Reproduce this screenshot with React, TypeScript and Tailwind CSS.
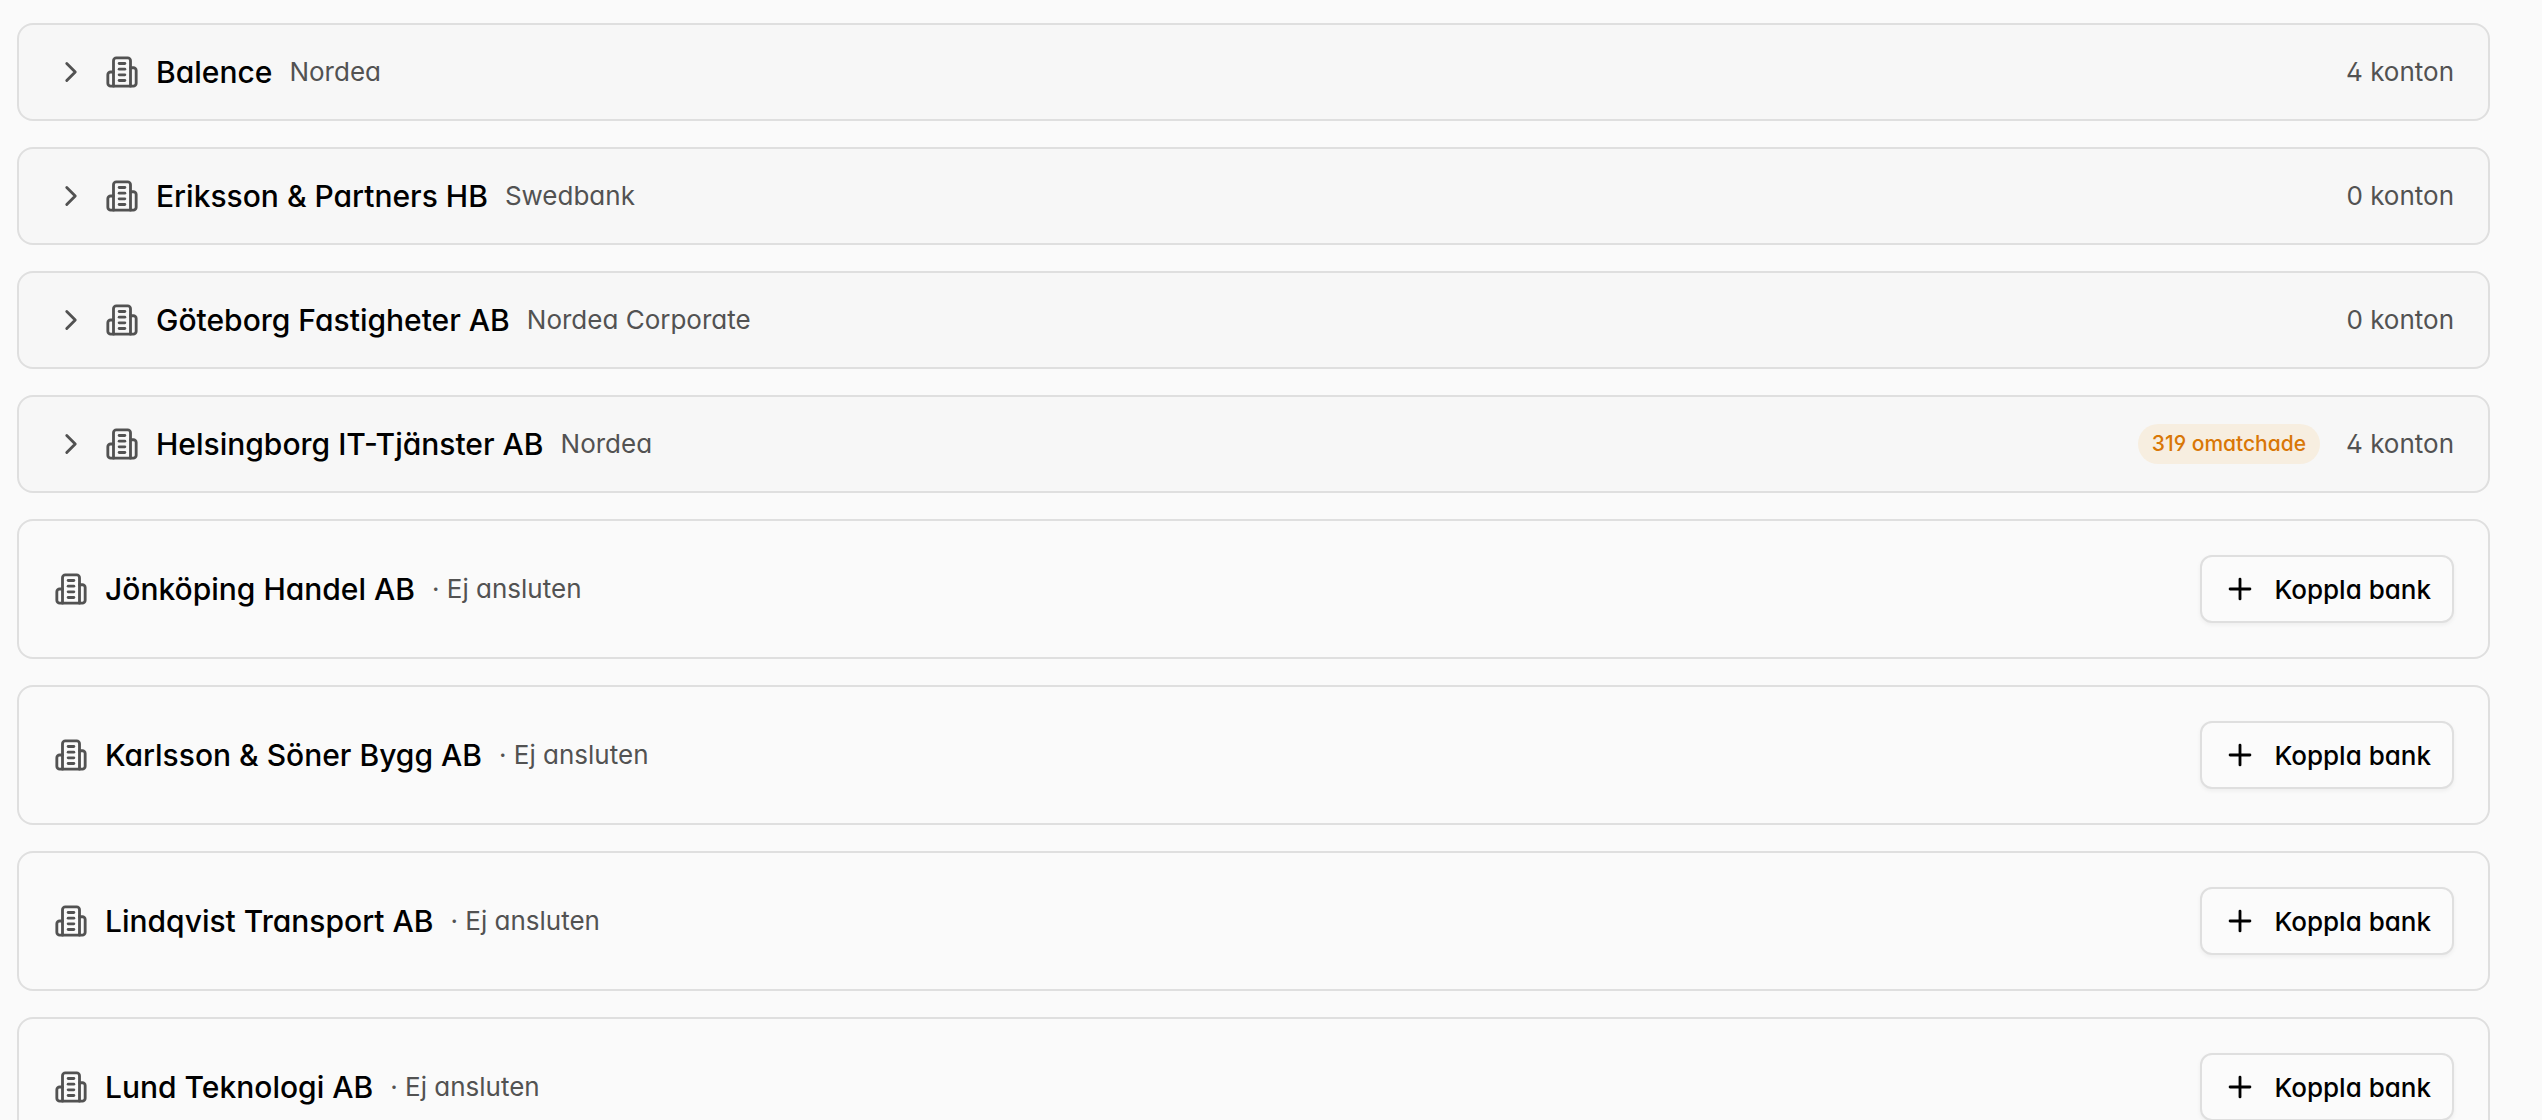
import { ChevronRight, Plus } from 'lucide-react'

type Company = {
  name: string
  bank?: string
  accounts?: number
  unmatched?: number
}

const companies: Company[] = [
  { name: 'Balence', bank: 'Nordea', accounts: 4 },
  { name: 'Eriksson & Partners HB', bank: 'Swedbank', accounts: 0 },
  { name: 'Göteborg Fastigheter AB', bank: 'Nordea Corporate', accounts: 0 },
  { name: 'Helsingborg IT-Tjänster AB', bank: 'Nordea', accounts: 4, unmatched: 319 },
  { name: 'Jönköping Handel AB' },
  { name: 'Karlsson & Söner Bygg AB' },
  { name: 'Lindqvist Transport AB' },
  { name: 'Lund Teknologi AB' },
]

function BuildingIcon() {
  return (
    <svg
      viewBox="0 0 24 24"
      className="size-[34px] shrink-0 text-[#525252]"
      fill="none"
      stroke="currentColor"
      strokeWidth="2"
      strokeLinecap="round"
      strokeLinejoin="round"
      aria-hidden="true"
    >
      <path d="M6 22V4a2 2 0 0 1 2-2h8a2 2 0 0 1 2 2v18Z" />
      <path d="M6 12H4a2 2 0 0 0-2 2v6a2 2 0 0 0 2 2h2" />
      <path d="M18 9h2a2 2 0 0 1 2 2v9a2 2 0 0 1-2 2h-2" />
      <path d="M10 6h4" />
      <path d="M10 10h4" />
      <path d="M10 14h4" />
      <path d="M10 18h4" />
    </svg>
  )
}

function ConnectedRow({ company }: { company: Company }) {
  return (
    <button
      type="button"
      className="flex w-full items-center justify-between rounded-2xl border-2 border-[#dfdfdf] bg-[#f7f7f7] py-[26px] pr-[34px] pl-[35px] text-left"
    >
      <span className="flex items-center gap-[17px]">
        <ChevronRight className="size-[34px] shrink-0 text-[#525252]" />
        <BuildingIcon />
        <span className="text-[30px] leading-[42px] font-medium text-black">{company.name}</span>
        <span className="text-[26px] leading-[42px] text-[#525252]">{company.bank}</span>
      </span>
      <span className="flex items-center gap-[26px]">
        {company.unmatched && (
          <span className="rounded-full bg-[#f7eee0] px-[14px] text-[21px] leading-[40px] font-medium text-[#d97706]">
            {company.unmatched} omatchade
          </span>
        )}
        <span className="text-[26px] leading-[42px] text-[#525252]">{company.accounts} konton</span>
      </span>
    </button>
  )
}

function UnconnectedRow({ company }: { company: Company }) {
  return (
    <div className="flex items-center justify-between rounded-2xl border-2 border-[#dfdfdf] py-[34px] pr-[34px] pl-[35px]">
      <div className="flex items-center gap-[17px]">
        <BuildingIcon />
        <h3 className="text-[30px] leading-[42px] font-medium text-black">{company.name}</h3>
        <span className="text-[26px] leading-[42px] text-[#525252]">· Ej ansluten</span>
      </div>
      <button
        type="button"
        className="flex h-[68px] items-center gap-[17px] rounded-xl border-2 border-[#dfdfdf] bg-[#fbfbfb] px-[21px] text-[26px] font-medium text-black shadow-[0_2px_4px_rgba(0,0,0,0.05)]"
      >
        <Plus className="size-[34px]" />
        Koppla bank
      </button>
    </div>
  )
}

export default function App() {
  return (
    <main className="h-screen overflow-hidden bg-[#fafafa] pt-[23px] pr-[52px] pl-[17px] font-['Inter',sans-serif] [font-feature-settings:'cv02','cv03','cv04','cv11'] [font-optical-sizing:none]">
      <div className="flex flex-col gap-[26px]">
        {companies.map((company) =>
          company.bank ? (
            <ConnectedRow key={company.name} company={company} />
          ) : (
            <UnconnectedRow key={company.name} company={company} />
          ),
        )}
      </div>
    </main>
  )
}
